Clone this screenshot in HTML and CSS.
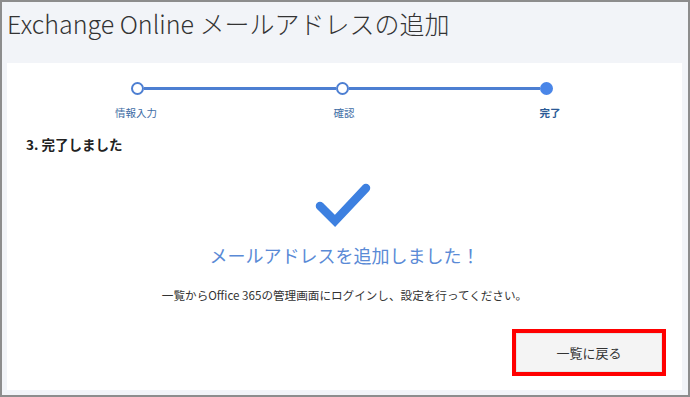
FILE: index.html
```html
<!DOCTYPE html>
<html lang="ja">
<head>
<meta charset="utf-8">
<title>Exchange Online メールアドレスの追加</title>
<link rel="stylesheet" href="styles.css">
</head>
<body>
<div class="frame">
  <header class="page-head">
    <h1 class="page-title">Exchange Online メールアドレスの追加</h1>
  </header>
  <main class="card">
    <div class="stepper">
      <div class="track">
        <span class="dot"></span>
        <span class="bar"></span>
        <span class="dot"></span>
        <span class="bar"></span>
        <span class="dot dot-active"></span>
      </div>
      <div class="labels">
        <span class="label">情報入力</span>
        <span class="label">確認</span>
        <span class="label label-active">完了</span>
      </div>
    </div>
    <h2 class="section-title">3. 完了しました</h2>
    <div class="done">
      <svg class="check" width="64" height="52" viewBox="0 0 64 52" aria-hidden="true">
        <polyline points="7,27 22,42 53,9" fill="none" stroke="#3d80e0" stroke-width="8.5" stroke-linecap="round" stroke-linejoin="miter"/>
      </svg>
      <p class="done-msg">メールアドレスを追加しました！</p>
      <p class="done-note">一覧からOffice 365の管理画面にログインし、設定を行ってください。</p>
    </div>
    <div class="actions">
      <div class="highlight">
        <button class="btn" type="button">一覧に戻る</button>
      </div>
    </div>
  </main>
</div>
</body>
</html>
```

FILE: styles.css
```css
* { box-sizing: border-box; }
html, body { margin: 0; padding: 0; }
body {
  font-family: "Noto Sans CJK JP", "Noto Sans", sans-serif;
  color: #333;
}
.frame {
  width: 690px;
  height: 397px;
  border: 2px solid #8d8d8d;
  background: #f2f4f8;
  display: flex;
  flex-direction: column;
}
.page-head {
  height: 61px;
  padding: 3px 0 0 5px;
}
.page-title {
  margin: 0;
  font-size: 25px;
  font-weight: 300;
  line-height: 36px;
  color: #333;
}
.card {
  flex: 1;
  margin: 0 6px 5px 5px;
  background: #fff;
  display: flex;
  flex-direction: column;
}
.stepper {
  padding-top: 18px;
}
.track {
  display: flex;
  align-items: center;
  margin-left: 124px;
  width: 422px;
  height: 14px;
}
.dot {
  width: 13px;
  height: 13px;
  border-radius: 50%;
  border: 2.5px solid #4d7fd2;
  background: #fff;
  flex: none;
}
.dot-active {
  background: #4a86e8;
  border-color: #4a86e8;
}
.bar {
  flex: 1;
  height: 3px;
  background: #4d7fd2;
}
.labels {
  display: grid;
  grid-template-columns: 204px 204px 204px;
  margin-left: 29px;
  margin-top: 10px;
}
.label {
  text-align: center;
  font-size: 10.5px;
  line-height: 16px;
  color: #3f6ea6;
}
.label:first-child { padding-right: 4px; }
.label:nth-child(2) { padding-left: 4px; }
.label-active {
  color: #2b5a96;
  font-weight: 700;
  padding-left: 8px;
}
.section-title {
  margin: 14px 0 0 19px;
  font-size: 13.5px;
  font-weight: 700;
  line-height: 18px;
  color: #222;
}
.done {
  display: flex;
  flex-direction: column;
  align-items: center;
}
.check {
  display: block;
  margin-top: 26px;
  margin-left: 1px;
}
.done-msg {
  margin: 11px 0 0;
  font-size: 18px;
  line-height: 26px;
  color: #5a8ad6;
}
.done-note {
  margin: 19px 0 0;
  font-size: 11.6px;
  line-height: 16px;
  color: #333;
}
.actions {
  display: flex;
  justify-content: flex-end;
  padding: 26px 16px 0 0;
}
.highlight {
  border: 4px solid #ff0000;
  padding: 0;
}
.btn {
  display: block;
  width: 146px;
  height: 39px;
  border: 1px solid #e4e4e4;
  background: #f4f4f4;
  font-family: "Noto Sans CJK JP", "Noto Sans", sans-serif;
  font-size: 13px;
  color: #333;
  padding: 0;
}
```
